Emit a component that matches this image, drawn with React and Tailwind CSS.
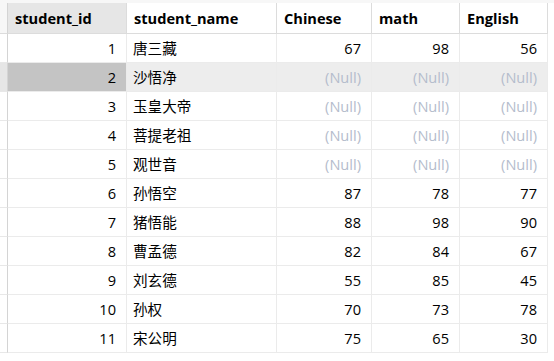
import React from "react";

const rows = [
  [1, "唐三藏", 67, 98, 56],
  [2, "沙悟净", null, null, null],
  [3, "玉皇大帝", null, null, null],
  [4, "菩提老祖", null, null, null],
  [5, "观世音", null, null, null],
  [6, "孙悟空", 87, 78, 77],
  [7, "猪悟能", 88, 98, 90],
  [8, "曹孟德", 82, 84, 67],
  [9, "刘玄德", 55, 85, 45],
  [10, "孙权", 70, 73, 78],
  [11, "宋公明", 75, 65, 30],
];

const headers = ["student_id", "student_name", "Chinese", "math", "English"];

const font = { fontFamily: '"Open Sans", "Noto Sans CJK SC", sans-serif' };

const App = () => {
  const selectedRow = 2;

  return (
    <div className="h-[361px] w-[554px] overflow-hidden bg-white text-[14.6px] text-black" style={font}>
      <div className="h-[3px] bg-[#f7f7f7]" />
      <div className="grid grid-cols-[8px_119px_150px_95px_88px_88px]">
        {/* header */}
        <div className="h-[31px] border-r border-b border-r-[#d4d4d4] border-b-[#dcdcdc] bg-[#f7f7f7]" />
        {headers.map((h, i) => (
          <div
            key={h}
            className={`flex h-[31px] items-center border-r border-b border-[#dcdcdc] pt-px pl-[7px] font-bold ${
              i === 0 ? "bg-[#e6e6e6]" : "bg-white"
            }`}
          >
            {h}
          </div>
        ))}

        {/* body */}
        {rows.map((r) => {
          const sel = r[0] === selectedRow;
          return (
            <React.Fragment key={r[0]}>
              <div
                className={`h-[29px] border-r border-b border-r-[#d4d4d4] border-b-[#e8e8e8] ${
                  sel ? "bg-[#e6e6e6]" : "bg-white"
                }`}
              />
              <div
                className={`flex h-[29px] items-center justify-end border-r border-b border-[#ebebeb] pt-px pr-[10px] ${
                  sel ? "bg-[#c4c4c4]" : "bg-white"
                }`}
              >
                {r[0]}
              </div>
              <div
                className={`flex h-[29px] items-center border-r border-b border-[#ebebeb] pt-px pl-[6px] ${
                  sel ? "bg-[#ededed]" : "bg-white"
                }`}
              >
                {r[1]}
              </div>
              {[r[2], r[3], r[4]].map((v, j) => (
                <div
                  key={j}
                  className={`flex h-[29px] items-center justify-end border-r border-b border-[#ebebeb] pt-px pr-[10px] ${
                    sel ? "bg-[#ededed]" : "bg-white"
                  } ${v === null ? "text-[#b4bccc]" : ""}`}
                >
                  {v === null ? "(Null)" : v}
                </div>
              ))}
            </React.Fragment>
          );
        })}
      </div>
    </div>
  );
};

export default App;
